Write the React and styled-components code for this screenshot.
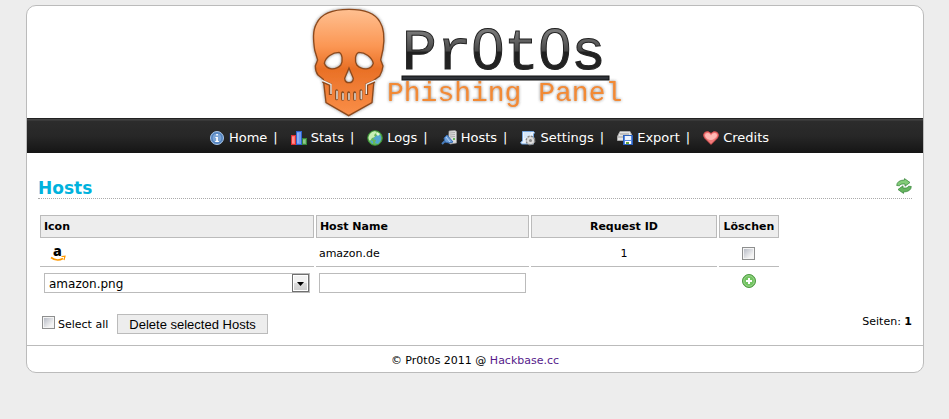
import React from "react";
import styled, { createGlobalStyle } from "styled-components";

const GlobalStyle = createGlobalStyle`
  *, *::before, *::after { box-sizing: border-box; }
  body {
    margin: 0;
    background: #ededed;
    color: #000;
    font-family: Verdana, "DejaVu Sans", sans-serif;
    font-size: 11px;
    line-height: 14px;
  }
`;

const Panel = styled.div`
  margin: 5px 25px 0 26px;
  background: #fff;
  border: 1px solid #bbb;
  border-radius: 10px;
  overflow: hidden;
`;

const Header = styled.header`
  display: flex;
  justify-content: center;
`;

const Nav = styled.nav`
  display: flex;
  justify-content: center;
  align-items: center;
  gap: 13px;
  height: 35px;
  padding: 3px 0 0 28px;
  border-top: 1px solid #222;
  background: linear-gradient(#444 0, #444 1px, #2c2c2c 2px, #272727 50%, #151515 100%);
  color: #fff;
  font-size: 13px;
  line-height: 18px;
`;

const NavItem = styled.span`
  display: flex;
  align-items: center;
  gap: 6px;
`;

const NavLink = styled.a`
  display: flex;
  align-items: center;
  gap: 4px;
  color: #fff;
  text-decoration: none;
`;

const Content = styled.main`
  padding: 23px 11px 11px;
`;

const TitleBar = styled.div`
  display: flex;
  justify-content: space-between;
  align-items: flex-end;
  height: 23px;
  margin-bottom: 14px;
  border-bottom: 1px dotted #aaa;
`;

const Title = styled.h1`
  margin: 0;
  color: #00b2dd;
  font-size: 17px;
  line-height: 20px;
`;

const IconButton = styled.button`
  display: inline-block;
  padding: 0;
  border: 0;
  background: none;
  line-height: 0;
  vertical-align: middle;
  cursor: pointer;
  margin-bottom: 4px;
`;

const HostTable = styled.table`
  width: 85%;
  table-layout: fixed;
  border-collapse: separate;
  border-spacing: 2px;
`;

const Col = styled.col`
  width: ${(p) => p.$width};
`;

const HeadCell = styled.th`
  height: 23px;
  padding: 0 3px;
  border: 1px solid #bbb;
  background: #ededed;
  text-align: ${(p) => p.$align || "left"};
`;

const Cell = styled.td`
  height: 27px;
  padding: ${(p) => (p.$last ? "0 3px" : "2px 3px 0")};
  border-bottom: ${(p) => (p.$last ? "0" : "1px solid #bbb")};
  text-align: ${(p) => p.$align || "left"};
  vertical-align: middle;
`;

const HostIcon = styled.svg`
  display: block;
  margin-left: 7px;
  overflow: visible;
`;

const SelectWrap = styled.div`
  position: relative;
  margin: 0 1px;
`;

const Select = styled.select`
  display: block;
  appearance: none;
  width: 100%;
  height: 20px;
  padding: 1px 20px 0 4px;
  border: 1px solid #bbb;
  border-radius: 0;
  background: #fff;
  color: #000;
  font: 12px/18px Verdana, "DejaVu Sans", sans-serif;
`;

const SelectArrow = styled.svg`
  position: absolute;
  top: 1px;
  right: 1px;
  pointer-events: none;
`;

const TextInput = styled.input`
  display: block;
  width: 100%;
  height: 20px;
  padding: 0 4px;
  border: 1px solid #bbb;
  background: #fff;
  font: 12px/18px Verdana, "DejaVu Sans", sans-serif;
`;

const Checkbox = styled.input`
  appearance: none;
  display: inline-block;
  width: 13px;
  height: 13px;
  margin: 0 0 2px;
  border: 1px solid #8e8f8f;
  background: linear-gradient(135deg, #b8bcc6, #f4f4f4 80%) center / 9px 9px no-repeat #f4f4f4;
  vertical-align: middle;
  &:checked { background: #567; }
`;

const Actions = styled.div`
  display: flex;
  justify-content: space-between;
  align-items: flex-start;
  margin-top: 16px;
  padding: 0 0 0 4px;
`;

const ActionGroup = styled.div`
  display: flex;
  align-items: center;
  gap: 9px;
`;

const SelectAll = styled.label`
  display: flex;
  align-items: flex-start;
  gap: 3px;
`;

const LabelText = styled.span`
  padding-top: 2px;
`;

const PageCount = styled.span`
  padding-top: 1px;
`;

const Button = styled.button`
  height: 20px;
  padding: 1px 11px 0;
  border: 1px solid #bbb;
  background: #ededed;
  color: #000;
  font: 13px/18px Arial, "Liberation Sans", sans-serif;
`;

const Footer = styled.footer`
  padding: 8px 0 4px;
  border-top: 1px solid #bbb;
  text-align: center;
`;

const FooterLink = styled.a`
  color: #551a8b;
  text-decoration: none;
`;

const Icon = ({ children }) => (
  <svg width="16" height="16" viewBox="0 0 16 16" aria-hidden="true">{children}</svg>
);

const InfoIcon = () => (
  <Icon>
    <circle cx="8" cy="8" r="6.5" fill="#5f8fc8" stroke="#a9c4e6" />
    <circle cx="8" cy="8" r="5" fill="#7ba4d6" stroke="#3e6fae" strokeWidth=".7" />
    <path d="M7.2 4h1.7v1.6H7.2zM6.4 7h2.5v4h1v1H6.2v-1h1V8h-.8z" fill="#fff" />
  </Icon>
);

const StatsIcon = () => (
  <Icon>
    <rect x=".5" y="5.5" width="4" height="9" fill="#ff7272" stroke="#dc3030" />
    <rect x="5.5" y="1.5" width="5" height="13" fill="#6d9bf2" stroke="#2d63cf" />
    <rect x="11.5" y="8.5" width="4" height="6" fill="#75b875" stroke="#368736" />
    <path d="M2 7v6M7 3v10M13 10v3" stroke="#fff" strokeOpacity=".4" />
  </Icon>
);

const GlobeIcon = () => (
  <Icon>
    <circle cx="8" cy="8" r="7.3" fill="#67b85a" stroke="#398e37" />
    <path d="M3 4Q6 0 10 2L7 5l1 2-3 1-2 3Q0 8 3 4Z" fill="#c9efb5" />
    <path d="M8 7l3-3 3 2v4l-3 4-3-1 1-3-3-1zM3 10l3 1v3Q4 13 3 10Z" fill="#52a6d0" />
    <path d="M10 2l3 2-2 2-2-2z" fill="#e0f7cf" />
  </Icon>
);

const HostsIcon = () => (
  <Icon>
    <path d="M8 1l6-.5 1.5 1V13L9 14 7.5 12z" fill="#dedede" stroke="#999" strokeWidth=".7" />
    <path d="M9 3l5-.5M9 5l5-.5M9 7l5-.5" stroke="#aaa" />
    <path d="M13 8v2" stroke="#42ad35" strokeWidth="1.5" />
    <path d="M1 14l3-3" stroke="#477dbc" strokeWidth="2" />
    <path d="M3 8l3-3 6 7-4 1-4-1z" fill="#6c9fda" stroke="#376bb0" />
    <path d="M5 7l4 5" stroke="#b8d5f7" />
  </Icon>
);

const SettingsIcon = () => (
  <Icon>
    <path d="M2.5 1.5h11q2 1 0 2.5v10h-12q-2-2 1-3z" fill="#e9f3ff" stroke="#73a4de" />
    <path d="M4 3h7M4 5h6M4 7h4" stroke="#c4daf3" />
    <circle cx="10.5" cy="10.5" r="4" fill="#c9c9c9" stroke="#888" strokeDasharray="2 1.1" strokeWidth="2" />
    <circle cx="10.5" cy="10.5" r="3.5" fill="#ddd" />
    <circle cx="10.5" cy="10.5" r="1.5" fill="#888" />
  </Icon>
);

const ExportIcon = () => (
  <Icon>
    <path d="M3 1.5h10l2.5 5v4H.5v-4z" fill="#e4e4e4" stroke="#aaa" />
    <path d="M1 7h14M3 4h9" stroke="#999" />
    <rect x="6.5" y="5.5" width="9" height="9" fill="#5688e2" stroke="#2c61bd" />
    <path d="M8 6h6v4H8z" fill="#edf4ff" />
    <path d="M8 11h6v3H8z" fill="#fff" />
    <path d="M9 12h3v2H9z" fill="#65a23d" />
  </Icon>
);

const HeartIcon = () => (
  <Icon>
    <path d="M8 14.5L1.5 8Q-.8 4.5 2 2.2 5.5.5 8 3.5q2.5-3 6-1.3Q16.8 4.5 14.5 8Z" fill="#f27c7c" stroke="#d84949" strokeWidth=".8" />
    <path d="M2 6q0-3 3-3 2 0 3 2.5Q9 3 11.500 3 14 3 14 6q-3 4-6 4Q4 10 2 6Z" fill="#ffb9b4" />
  </Icon>
);

const RefreshIcon = () => (
  <Icon>
    <path d="M.7 7.5Q1 2.300 8.500 2V.6L14 4.500l-5 3.700V6Q4 5.500 3.500 7.800Z" fill="#83cc78" stroke="#3f8a41" strokeWidth=".8" />
    <path d="M15.300 8.500Q15 13.700 7.500 14v1.400L2 11.500l5-3.700V10q5 .5 5.500-1.800Z" fill="#65b55e" stroke="#3f8a41" strokeWidth=".8" />
  </Icon>
);

const AddIcon = () => (
  <Icon>
    <circle cx="8" cy="8" r="6.5" fill="#61b551" stroke="#4e9a42" />
    <circle cx="8" cy="8" r="5.3" fill="#72c461" stroke="#a8dc9a" strokeWidth=".8" />
    <path d="M8 5v6M5 8h6" stroke="#fff" strokeWidth="2" />
  </Icon>
);

const Logo = () => (
  <svg width="332" height="112" viewBox="0 0 332 112" role="img" aria-label="Pr0t0s Phishing Panel">
    <defs>
      <linearGradient id="bone" x1="0" y1="0" x2="0" y2="1">
        <stop offset="0" stopColor="#ffc091" />
        <stop offset=".35" stopColor="#fb9653" />
        <stop offset=".56" stopColor="#e97026" />
        <stop offset="1" stopColor="#fa8f49" />
      </linearGradient>
      <linearGradient id="steel" gradientUnits="userSpaceOnUse" x1="0" y1="26" x2="0" y2="65">
        <stop offset="0" stopColor="#777" />
        <stop offset=".48" stopColor="#484848" />
        <stop offset=".52" stopColor="#202020" />
        <stop offset="1" stopColor="#242424" />
      </linearGradient>
      <filter id="glow" x="-20%" y="-20%" width="140%" height="140%">
        <feDropShadow dx="0" dy="0" stdDeviation="1.5" floodColor="#333" floodOpacity=".6" />
      </filter>
    </defs>
    <g filter="url(#glow)">
      <g transform="translate(-9 -6) scale(.3333)">
        <path
          fillRule="evenodd"
          d="M147 28C95 28 62 44 50 70C37 92 40 120 44 150L53 180L46 198Q46 215 54 225L70 238L78 308L146 347L216 308L222 240L239 228Q247 215 249 198L242 180L249 148C254 115 254 88 240 66C226 40 190 28 147 28Z
            M73 190C76 171 98 157 117 157C127 161 130 182 122 196C107 211 80 211 73 190Z
            M220 190C216 171 195 157 177 157C165 161 163 182 171 196C186 211 214 211 220 190Z
            M147 204L134 235Q135 248 147 248Q159 248 160 235Z"
          fill="url(#bone)" stroke="#8d4a1c" strokeWidth="4"
        />
        <path d="M68 244L91 254V285M224 244L200 254V285" fill="none" stroke="#8d4a1c" strokeWidth="9" />
        <path d="M66 241L93 253V282M226 241L199 253V282" fill="none" stroke="#eee" strokeWidth="4" />
        <path d="M110 272v24M128 278v20M146 278v20M164 278v20M183 272v24" stroke="#7d461f" strokeWidth="9" strokeLinecap="round" />
        <path d="M111 274v22M129 281v17M147 281v17M165 281v17M184 274v22" stroke="#d8d0ca" strokeWidth="5" strokeLinecap="round" />
      </g>
    </g>
    <text x="93" y="63" fontFamily="Liberation Mono, monospace" fontSize="58" fill="url(#steel)" stroke="#222" strokeWidth="1">
      Pr<tspan fontFamily="Liberation Sans, sans-serif">0</tspan>t<tspan fontFamily="Liberation Sans, sans-serif">0</tspan>s
    </text>
    <rect x="93" y="70" width="207" height="4" fill="#30343a" stroke="#111" />
    <text x="78" y="95" fontFamily="Liberation Mono, monospace" fontSize="28" fill="#f28a36" filter="url(#glow)">
      Phishing Panel
    </text>
  </svg>
);

const navItems = [
  ["Home", InfoIcon],
  ["Stats", StatsIcon],
  ["Logs", GlobeIcon],
  ["Hosts", HostsIcon],
  ["Settings", SettingsIcon],
  ["Export", ExportIcon],
  ["Credits", HeartIcon],
];

export default function App() {
  return (
    <>
      <GlobalStyle />
      <Panel>
        <Header><Logo /></Header>
        <Nav>
          {navItems.map(([label, Glyph], i) => (
            <NavItem key={label}>
              <NavLink href="#"><Glyph />{label}</NavLink>
              {i < navItems.length - 1 && <span>|</span>}
            </NavItem>
          ))}
        </Nav>
        <Content>
          <TitleBar>
            <Title>Hosts</Title>
            <IconButton type="button" aria-label="Refresh"><RefreshIcon /></IconButton>
          </TitleBar>
          <HostTable>
            <colgroup>
              <Col $width="auto" />
              <Col $width="213px" />
              <Col $width="186px" />
              <Col $width="60px" />
            </colgroup>
            <thead>
              <tr>
                <HeadCell>Icon</HeadCell>
                <HeadCell>Host Name</HeadCell>
                <HeadCell $align="center">Request ID</HeadCell>
                <HeadCell $align="center">Löschen</HeadCell>
              </tr>
            </thead>
            <tbody>
              <tr>
                <Cell>
                  <HostIcon width="16" height="16" viewBox="0 0 16 16" role="img" aria-label="amazon">
                    <text x="3" y="10" fontFamily="Open Sans, sans-serif" fontWeight="800" fontSize="14">a</text>
                    <path d="M1 11.5Q7 16 13 12.5" fill="none" stroke="#f90" strokeWidth="1.6" />
                    <path d="M11.5 10.5l3.5-.3-1 3.8" fill="none" stroke="#f90" strokeWidth="1.2" />
                  </HostIcon>
                </Cell>
                <Cell>amazon.de</Cell>
                <Cell $align="center">1</Cell>
                <Cell $align="center"><Checkbox type="checkbox" aria-label="Löschen amazon.de" /></Cell>
              </tr>
              <tr>
                <Cell $last>
                  <SelectWrap>
                    <Select aria-label="Icon" defaultValue="amazon.png">
                      <option>amazon.png</option>
                    </Select>
                    <SelectArrow width="17" height="18" viewBox="0 0 17 18" aria-hidden="true">
                      <defs>
                        <linearGradient id="arrowFace" x1="0" y1="0" x2="0" y2="1">
                          <stop offset=".5" stopColor="#f2f2f2" />
                          <stop offset=".5" stopColor="#dcdcdc" />
                          <stop offset="1" stopColor="#cfcfcf" />
                        </linearGradient>
                      </defs>
                      <rect x=".5" y=".5" width="16" height="17" fill="#fff" stroke="#707070" />
                      <rect x="2" y="2" width="13" height="14" fill="url(#arrowFace)" />
                      <path d="M5 8h7l-3.5 4z" fill="#000" />
                    </SelectArrow>
                  </SelectWrap>
                </Cell>
                <Cell $last><TextInput type="text" aria-label="Host Name" /></Cell>
                <Cell $last />
                <Cell $last $align="center">
                  <IconButton type="button" aria-label="Add host"><AddIcon /></IconButton>
                </Cell>
              </tr>
            </tbody>
          </HostTable>
          <Actions>
            <ActionGroup>
              <SelectAll><Checkbox type="checkbox" /><LabelText>Select all</LabelText></SelectAll>
              <Button type="button">Delete selected Hosts</Button>
            </ActionGroup>
            <PageCount>Seiten: <b>1</b></PageCount>
          </Actions>
        </Content>
        <Footer>© Pr0t0s 2011 @ <FooterLink href="#">Hackbase.cc</FooterLink></Footer>
      </Panel>
    </>
  );
}
